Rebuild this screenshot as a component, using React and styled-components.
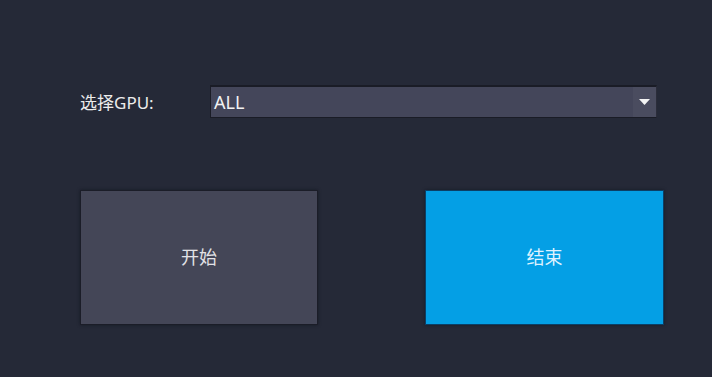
import React, { useState } from "react";
import styled, { createGlobalStyle } from "styled-components";

const GlobalStyle = createGlobalStyle`
  html, body {
    margin: 0;
    padding: 0;
    background: #252937;
  }
  body {
    font-family: "Noto Sans", "Noto Sans CJK SC", sans-serif;
  }
`;

const Page = styled.div`
  width: 712px;
  height: 377px;
  box-sizing: border-box;
  padding: 85px 0 0 80px;
  background: #252937;
  display: flex;
  flex-direction: column;
`;

const SelectRow = styled.div`
  display: flex;
  align-items: center;
  height: 33px;
`;

const Label = styled.span`
  width: 130px;
  font-size: 17px;
  color: #ececec;
`;

const Combo = styled.div`
  width: 447px;
  height: 33px;
  box-sizing: border-box;
  display: flex;
  background: #44465a;
  border: 1px solid #1a1c26;
  border-top-width: 2px;
  border-right-color: #2b2d3a;
`;

const ComboValue = styled.div`
  flex: 1;
  display: flex;
  align-items: center;
  padding-left: 3px;
  font-size: 18px;
  color: #f2f2f2;
`;

const ArrowBox = styled.div`
  width: 23px;
  display: flex;
  align-items: center;
  justify-content: center;
  background: #4a4c5f;
`;

const ButtonRow = styled.div`
  display: flex;
  gap: 107px;
  margin-top: 72px;
`;

const ActionButton = styled.button`
  width: ${(p) => p.$w}px;
  height: 135px;
  box-sizing: border-box;
  margin: 0;
  padding: 0 0 3px;
  border: 1px solid ${(p) => (p.$primary ? "#0b3f66" : "#1b1d28")};
  background: ${(p) => (p.$primary ? "#049fe5" : "#444657")};
  color: ${(p) => (p.$primary ? "#dff2ff" : "#e2e2e6")};
  font-family: "Noto Sans CJK SC", sans-serif;
  font-size: 18px;
  cursor: pointer;
  box-shadow: 0 0 3px rgba(10, 12, 20, 0.5);
`;

export default function App() {
  const [gpu] = useState("ALL");
  return (
    <>
      <GlobalStyle />
      <Page>
        <SelectRow>
          <Label>选择GPU:</Label>
          <Combo>
            <ComboValue>{gpu}</ComboValue>
            <ArrowBox>
              <svg width="11" height="6" viewBox="0 0 11 6">
                <polygon points="0,0 11,0 5.5,6" fill="#f4f4f4" />
              </svg>
            </ArrowBox>
          </Combo>
        </SelectRow>
        <ButtonRow>
          <ActionButton $w={238}>开始</ActionButton>
          <ActionButton $w={239} $primary>
            结束
          </ActionButton>
        </ButtonRow>
      </Page>
    </>
  );
}
